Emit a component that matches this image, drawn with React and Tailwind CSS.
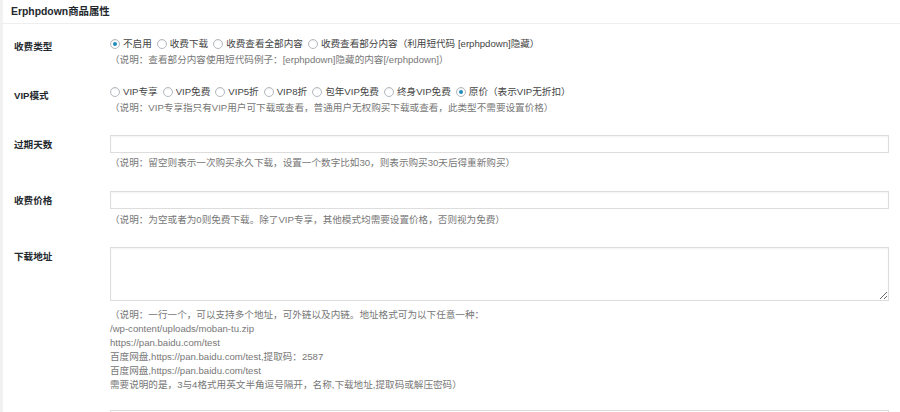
import React from "react";

const font = {
  fontFamily: '"Liberation Sans", "Noto Sans CJK SC", sans-serif',
};

function Radio({ label, checked }) {
  return (
    <label className="flex items-center gap-[3px] mr-[5px] text-[#444]">
      <span className="w-[10px] h-[10px] rounded-full border border-[#b4b9be] bg-white flex items-center justify-center shadow-[inset_0_1px_1px_rgba(0,0,0,0.08)]">
        {checked && <span className="w-[4px] h-[4px] rounded-full bg-[#1e8cbe]" />}
      </span>
      <span>{label}</span>
    </label>
  );
}

function Label({ children, pt }) {
  return (
    <div className={`w-[110px] shrink-0 pl-[11px] font-bold text-[#23282d] leading-4 ${pt}`}>
      {children}
    </div>
  );
}

export default function App() {
  return (
    <div className="w-[900px] h-[412px] overflow-hidden bg-white text-[9.6px] border-l-[3px] border-[#f1f1f1]" style={font}>
      <div className="h-[24px] border-b border-[#eeeeee] pl-[8px] flex items-center">
        <span className="font-bold text-[10.4px] text-[#23282d]">Erphpdown商品属性</span>
      </div>

      {/* 收费类型 */}
      <div className="flex">
        <Label pt="pt-[15px]">收费类型</Label>
        <div className="flex-1 pt-[12px] -ml-[3px]">
          <div className="flex items-center h-4">
            <Radio label="不启用" checked />
            <Radio label="收费下载" />
            <Radio label="收费查看全部内容" />
            <Radio label="收费查看部分内容（利用短代码 [erphpdown]隐藏）" />
          </div>
          <p className="leading-4 text-[#777]">（说明：查看部分内容使用短代码例子：[erphpdown]隐藏的内容[/erphpdown]）</p>
        </div>
      </div>

      {/* VIP模式 */}
      <div className="flex">
        <Label pt="pt-[20px]">VIP模式</Label>
        <div className="flex-1 pt-[16px] -ml-[3px]">
          <div className="flex items-center h-4">
            <Radio label="VIP专享" />
            <Radio label="VIP免费" />
            <Radio label="VIP5折" />
            <Radio label="VIP8折" />
            <Radio label="包年VIP免费" />
            <Radio label="终身VIP免费" />
            <Radio label="原价（表示VIP无折扣）" checked />
          </div>
          <p className="leading-4 text-[#777]">（说明：VIP专享指只有VIP用户可下载或查看，普通用户无权购买下载或查看，此类型不需要设置价格）</p>
        </div>
      </div>

      {/* 过期天数 */}
      <div className="flex">
        <Label pt="pt-[21px]">过期天数</Label>
        <div className="flex-1 pt-[19px] pr-[11px] -ml-[3px]">
          <input className="block w-full h-[18px] border border-[#dddddd] bg-white shadow-[inset_0_1px_2px_rgba(0,0,0,0.05)] outline-none" />
          <p className="mt-[2px] leading-4 text-[#777]">（说明：留空则表示一次购买永久下载，设置一个数字比如30，则表示购买30天后得重新购买）</p>
        </div>
      </div>

      {/* 收费价格 */}
      <div className="flex">
        <Label pt="pt-[22px]">收费价格</Label>
        <div className="flex-1 pt-[20px] pr-[11px] -ml-[3px]">
          <input className="block w-full h-[18px] border border-[#dddddd] bg-white shadow-[inset_0_1px_2px_rgba(0,0,0,0.05)] outline-none" />
          <p className="mt-[3px] leading-4 text-[#777]">（说明：为空或者为0则免费下载。除了VIP专享，其他模式均需要设置价格，否则视为免费）</p>
        </div>
      </div>

      {/* 下载地址 */}
      <div className="flex">
        <Label pt="pt-[21px]">下载地址</Label>
        <div className="flex-1 pt-[19px] pr-[11px] -ml-[3px]">
          <textarea className="block w-full h-[54px] border border-[#dddddd] bg-white shadow-[inset_0_1px_2px_rgba(0,0,0,0.05)] outline-none resize-y" />
          <div className="mt-[7px] leading-[14px] text-[#777]">
            <p>（说明：一行一个，可以支持多个地址，可外链以及内链。地址格式可为以下任意一种：</p>
            <p>/wp-content/uploads/moban-tu.zip</p>
            <p>https://pan.baidu.com/test</p>
            <p>百度网盘,https://pan.baidu.com/test,提取码：2587</p>
            <p>百度网盘,https://pan.baidu.com/test</p>
            <p>需要说明的是，3与4格式用英文半角逗号隔开，名称,下载地址,提取码或解压密码）</p>
          </div>
          <input className="block w-full h-[18px] mt-[18px] border border-[#dddddd] bg-white outline-none" />
        </div>
      </div>
    </div>
  );
}
